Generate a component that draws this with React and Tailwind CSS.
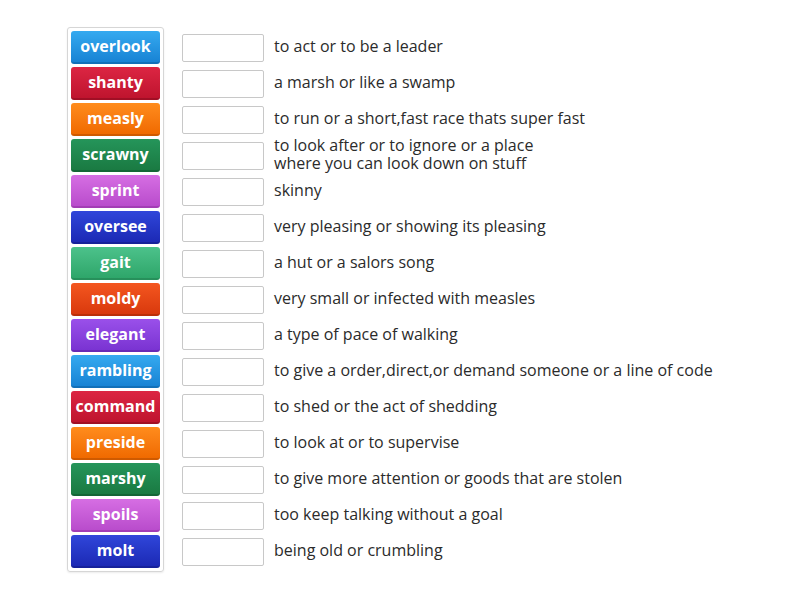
import React from "react";

const words = [
  "overlook", "shanty", "measly", "scrawny", "sprint", "oversee", "gait", "moldy",
  "elegant", "rambling", "command", "preside", "marshy", "spoils", "molt",
];

// colour cycle repeats every 9 tiles
const tileColors = [
  "bg-gradient-to-b from-[#35aaf0] to-[#1883d4] border-[#1270b8]",
  "bg-gradient-to-b from-[#dc2543] to-[#bf142e] border-[#a10f25]",
  "bg-gradient-to-b from-[#ff8c1c] to-[#f06a00] border-[#cf5a00]",
  "bg-gradient-to-b from-[#25955a] to-[#1a7a42] border-[#146636]",
  "bg-gradient-to-b from-[#d66ee3] to-[#b94ccc] border-[#a33db5]",
  "bg-gradient-to-b from-[#3046da] to-[#1c29b5] border-[#16219a]",
  "bg-gradient-to-b from-[#4cc28b] to-[#2ea66a] border-[#27905b]",
  "bg-gradient-to-b from-[#f4561f] to-[#d9390d] border-[#bb2f08]",
  "bg-gradient-to-b from-[#9a50ea] to-[#7a33d2] border-[#672ab5]",
];

const clues = [
  "to act or to be a leader",
  "a marsh or like a swamp",
  "to run or a short,fast race thats super fast",
  "to look after or to ignore or a place where you can look down on stuff",
  "skinny",
  "very pleasing or showing its pleasing",
  "a hut or a salors song",
  "very small or infected with measles",
  "a type of pace of walking",
  "to give a order,direct,or demand someone or a line of code",
  "to shed or the act of shedding",
  "to look at or to supervise",
  "to give more attention or goods that are stolen",
  "too keep talking without a goal",
  "being old or crumbling",
];

export default function App() {
  return (
    <div
      className="w-[800px] h-[600px] bg-white flex items-start pt-[27px] pl-[67px]"
      style={{ fontFamily: '"Open Sans", "Noto Sans", sans-serif' }}
    >
      {/* WORD TILES */}
      <div className="w-[97px] border border-[#d6d6d6] rounded-[3px] p-[3px] flex flex-col gap-[3px] shadow-[0_1px_2px_rgba(0,0,0,0.08)]">
        {words.map((w, i) => (
          <div
            key={w}
            className={`h-[33px] rounded-[3px] border-b-2 pb-[2px] flex items-center justify-center text-white font-bold text-[16px] leading-none ${tileColors[i % 9]}`}
          >
            {w}
          </div>
        ))}
      </div>

      {/* ANSWER ROWS */}
      <div className="flex flex-col gap-[3px] pt-[4px] ml-[18px]">
        {clues.map((c, i) => (
          <div key={i} className="h-[33px] flex items-center">
            <div className="w-[82px] h-[28px] border border-[#c8c8c8] rounded-[2px] bg-white shrink-0" />
            <div
              className={`ml-[10px] pb-[4px] text-[16px] leading-[18px] text-[#2b2b2b] ${
                i === 3 ? "w-[268px]" : "whitespace-nowrap"
              }`}
            >
              {c}
            </div>
          </div>
        ))}
      </div>
    </div>
  );
}
